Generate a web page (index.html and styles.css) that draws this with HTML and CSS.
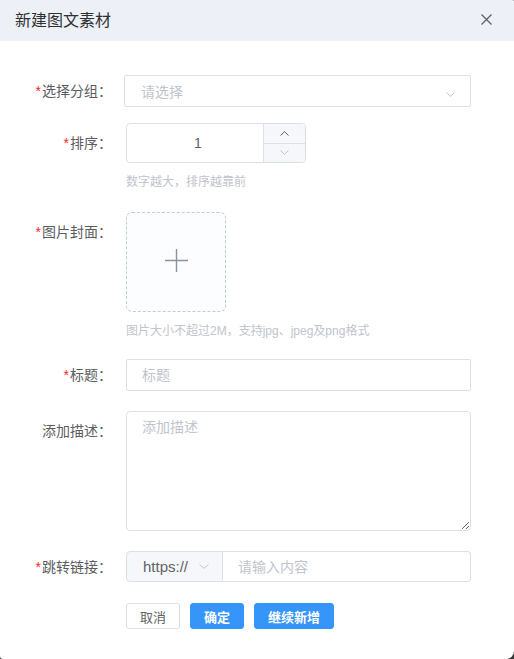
FILE: index.html
```html
<!DOCTYPE html>
<html lang="zh-CN">
<head>
<meta charset="utf-8">
<title>新建图文素材</title>
<link rel="stylesheet" href="styles.css">
</head>
<body>
<div class="dialog">
  <div class="dlg-header">
    <span class="dlg-title">新建图文素材</span>
    <span class="dlg-close">
      <svg width="11" height="11" viewBox="0 0 11 11"><path d="M0.5 0.5 L10.5 10.5 M10.5 0.5 L0.5 10.5" stroke="#606266" stroke-width="1.3" fill="none"/></svg>
    </span>
  </div>
  <form class="dlg-body">
    <div class="row row-first">
      <label class="lbl req h32">选择分组：</label>
      <div class="ctl">
        <div class="select">
          <span class="ph">请选择</span>
          <svg class="sel-arrow" width="9" height="5" viewBox="0 0 9 5"><path d="M0.5 0.5 L4.5 4.3 L8.5 0.5" stroke="#c0c4cc" stroke-width="1" fill="none"/></svg>
        </div>
      </div>
    </div>

    <div class="row">
      <label class="lbl req h40">排序：</label>
      <div class="ctl">
        <div class="num">
          <span class="num-val">1</span>
          <span class="num-ctrls">
            <span class="num-up"><svg width="9" height="5" viewBox="0 0 9 5"><path d="M0.5 4.5 L4.5 0.7 L8.5 4.5" stroke="#606266" stroke-width="1" fill="none"/></svg></span>
            <span class="num-down"><svg width="9" height="5" viewBox="0 0 9 5"><path d="M0.5 0.5 L4.5 4.3 L8.5 0.5" stroke="#c0c4cc" stroke-width="1" fill="none"/></svg></span>
          </span>
        </div>
        <div class="hint">数字越大，排序越靠前</div>
      </div>
    </div>

    <div class="row row-upload">
      <label class="lbl req h40">图片封面：</label>
      <div class="ctl">
        <div class="upload">
          <svg width="23" height="23" viewBox="0 0 23 23"><path d="M11.5 0 V23 M0 11.5 H23" stroke="#8c939d" stroke-width="1.4" fill="none"/></svg>
        </div>
        <div class="hint">图片大小不超过2M，支持jpg、jpeg及png格式</div>
      </div>
    </div>

    <div class="row">
      <label class="lbl req h32">标题：</label>
      <div class="ctl">
        <input class="txt" type="text" placeholder="标题">
      </div>
    </div>

    <div class="row">
      <label class="lbl h40">添加描述：</label>
      <div class="ctl">
        <textarea class="area" placeholder="添加描述"></textarea>
      </div>
    </div>

    <div class="row">
      <label class="lbl req h32">跳转链接：</label>
      <div class="ctl">
        <div class="link">
          <span class="prepend">
            <span class="proto">https://</span>
            <svg width="10" height="5" viewBox="0 0 10 5"><path d="M0.5 0.5 L5 4.3 L9.5 0.5" stroke="#c0c4cc" stroke-width="1" fill="none"/></svg>
          </span>
          <input class="link-input" type="text" placeholder="请输入内容">
        </div>
      </div>
    </div>

    <div class="actions">
      <button type="button" class="btn btn-plain">取消</button>
      <button type="button" class="btn btn-primary">确定</button>
      <button type="button" class="btn btn-primary">继续新增</button>
    </div>
  </form>
</div>
</body>
</html>
```

FILE: styles.css
```css
html {
  background: #3a3a3a;
  height: 100%;
}
body {
  margin: 0;
  height: 100%;
  font-family: "Liberation Sans", "Noto Sans CJK SC", sans-serif;
}
.dialog {
  width: 514px;
  height: 659px;
  background: #fff;
  border-radius: 0 2px 8px 3px;
  overflow: hidden;
}
.dlg-header {
  height: 41px;
  background: #edf0f7;
  display: flex;
  align-items: center;
  justify-content: space-between;
  padding: 0 22px 0 15px;
  box-sizing: border-box;
}
.dlg-title {
  font-size: 16px;
  line-height: 20px;
  color: #303133;
}
.dlg-close {
  display: flex;
  width: 11px;
  height: 11px;
  margin-top: -2px;
}
.dlg-body {
  padding-top: 34px;
  margin: 0;
}
.row {
  display: flex;
  margin-bottom: 20px;
}
.row-first {
  margin-bottom: 16px;
}
.row-upload {
  margin-bottom: 18px;
}
.lbl {
  flex: none;
  width: 126px;
  padding-right: 14px;
  box-sizing: border-box;
  text-align: right;
  font-size: 14px;
  color: #5a5c61;
}
.req::before {
  content: "*";
  color: #f42525;
  margin-right: 1px;
}
.h32 { line-height: 32px; }
.h40 { line-height: 40px; }
.ctl {
  display: flex;
  flex-direction: column;
}
.select {
  width: 347px;
  height: 32px;
  margin-left: -2px;
  box-sizing: border-box;
  border: 1px solid #dcdfe6;
  border-radius: 2px;
  padding: 0 15px 0 16px;
  display: flex;
  align-items: center;
  justify-content: space-between;
}
.ph {
  font-size: 14px;
  color: #c0c4cc;
}
.sel-arrow {
  margin-top: 6px;
}
.num {
  width: 180px;
  height: 40px;
  box-sizing: border-box;
  border: 1px solid #dcdfe6;
  border-radius: 4px;
  display: flex;
  overflow: hidden;
}
.num-val {
  flex: 1;
  text-align: center;
  padding-left: 6px;
  line-height: 38px;
  font-size: 14px;
  color: #606266;
}
.num-ctrls {
  width: 41px;
  border-left: 1px solid #dcdfe6;
  display: flex;
  flex-direction: column;
  background: #f5f7fa;
}
.num-up,
.num-down {
  flex: 1;
  display: flex;
  align-items: center;
  justify-content: center;
}
.num-up {
  border-bottom: 1px solid #dcdfe6;
}
.hint {
  font-size: 12px;
  line-height: 20px;
  color: #c0c4cc;
  margin-top: 9px;
}
.upload {
  width: 100px;
  height: 100px;
  box-sizing: border-box;
  border: 1px dashed #c0ccda;
  border-radius: 6px;
  background: #fbfdff;
  display: flex;
  align-items: center;
  justify-content: center;
  padding-bottom: 3px;
}
.txt {
  width: 345px;
  height: 32px;
  box-sizing: border-box;
  border: 1px solid #dcdfe6;
  border-radius: 2px;
  padding: 0 15px;
  font-family: inherit;
  font-size: 14px;
  color: #606266;
  outline: none;
  margin: 0;
}
.txt::placeholder,
.area::placeholder,
.link-input::placeholder {
  color: #c0c4cc;
}
.area {
  width: 345px;
  height: 120px;
  box-sizing: border-box;
  border: 1px solid #dcdfe6;
  border-radius: 4px;
  padding: 5px 15px;
  font-family: inherit;
  font-size: 14px;
  line-height: 20px;
  color: #606266;
  resize: vertical;
  outline: none;
  margin: 0;
  display: block;
}
.link {
  width: 345px;
  height: 31px;
  display: flex;
}
.prepend {
  width: 97px;
  box-sizing: border-box;
  background: #f5f7fa;
  border: 1px solid #dcdfe6;
  border-radius: 4px 0 0 4px;
  display: flex;
  align-items: center;
  padding-left: 16px;
  gap: 11px;
}
.proto {
  font-size: 15px;
  color: #606266;
}
.link-input {
  flex: 1;
  min-width: 0;
  height: 31px;
  box-sizing: border-box;
  border: 1px solid #dcdfe6;
  border-left: none;
  border-radius: 0 4px 4px 0;
  padding: 0 15px;
  font-family: inherit;
  font-size: 14px;
  color: #606266;
  outline: none;
  margin: 0;
}
.actions {
  display: flex;
  gap: 10px;
  padding-left: 126px;
}
.btn {
  height: 26px;
  padding: 0 13px;
  font-family: inherit;
  font-size: 13px;
  border-radius: 3px;
  margin: 0;
  cursor: pointer;
}
.btn-plain {
  background: #fff;
  border: 1px solid #dcdfe6;
  color: #606266;
}
.btn-primary {
  background: #3595f9;
  border: 1px solid #3595f9;
  color: #fff;
  font-weight: bold;
}
```
